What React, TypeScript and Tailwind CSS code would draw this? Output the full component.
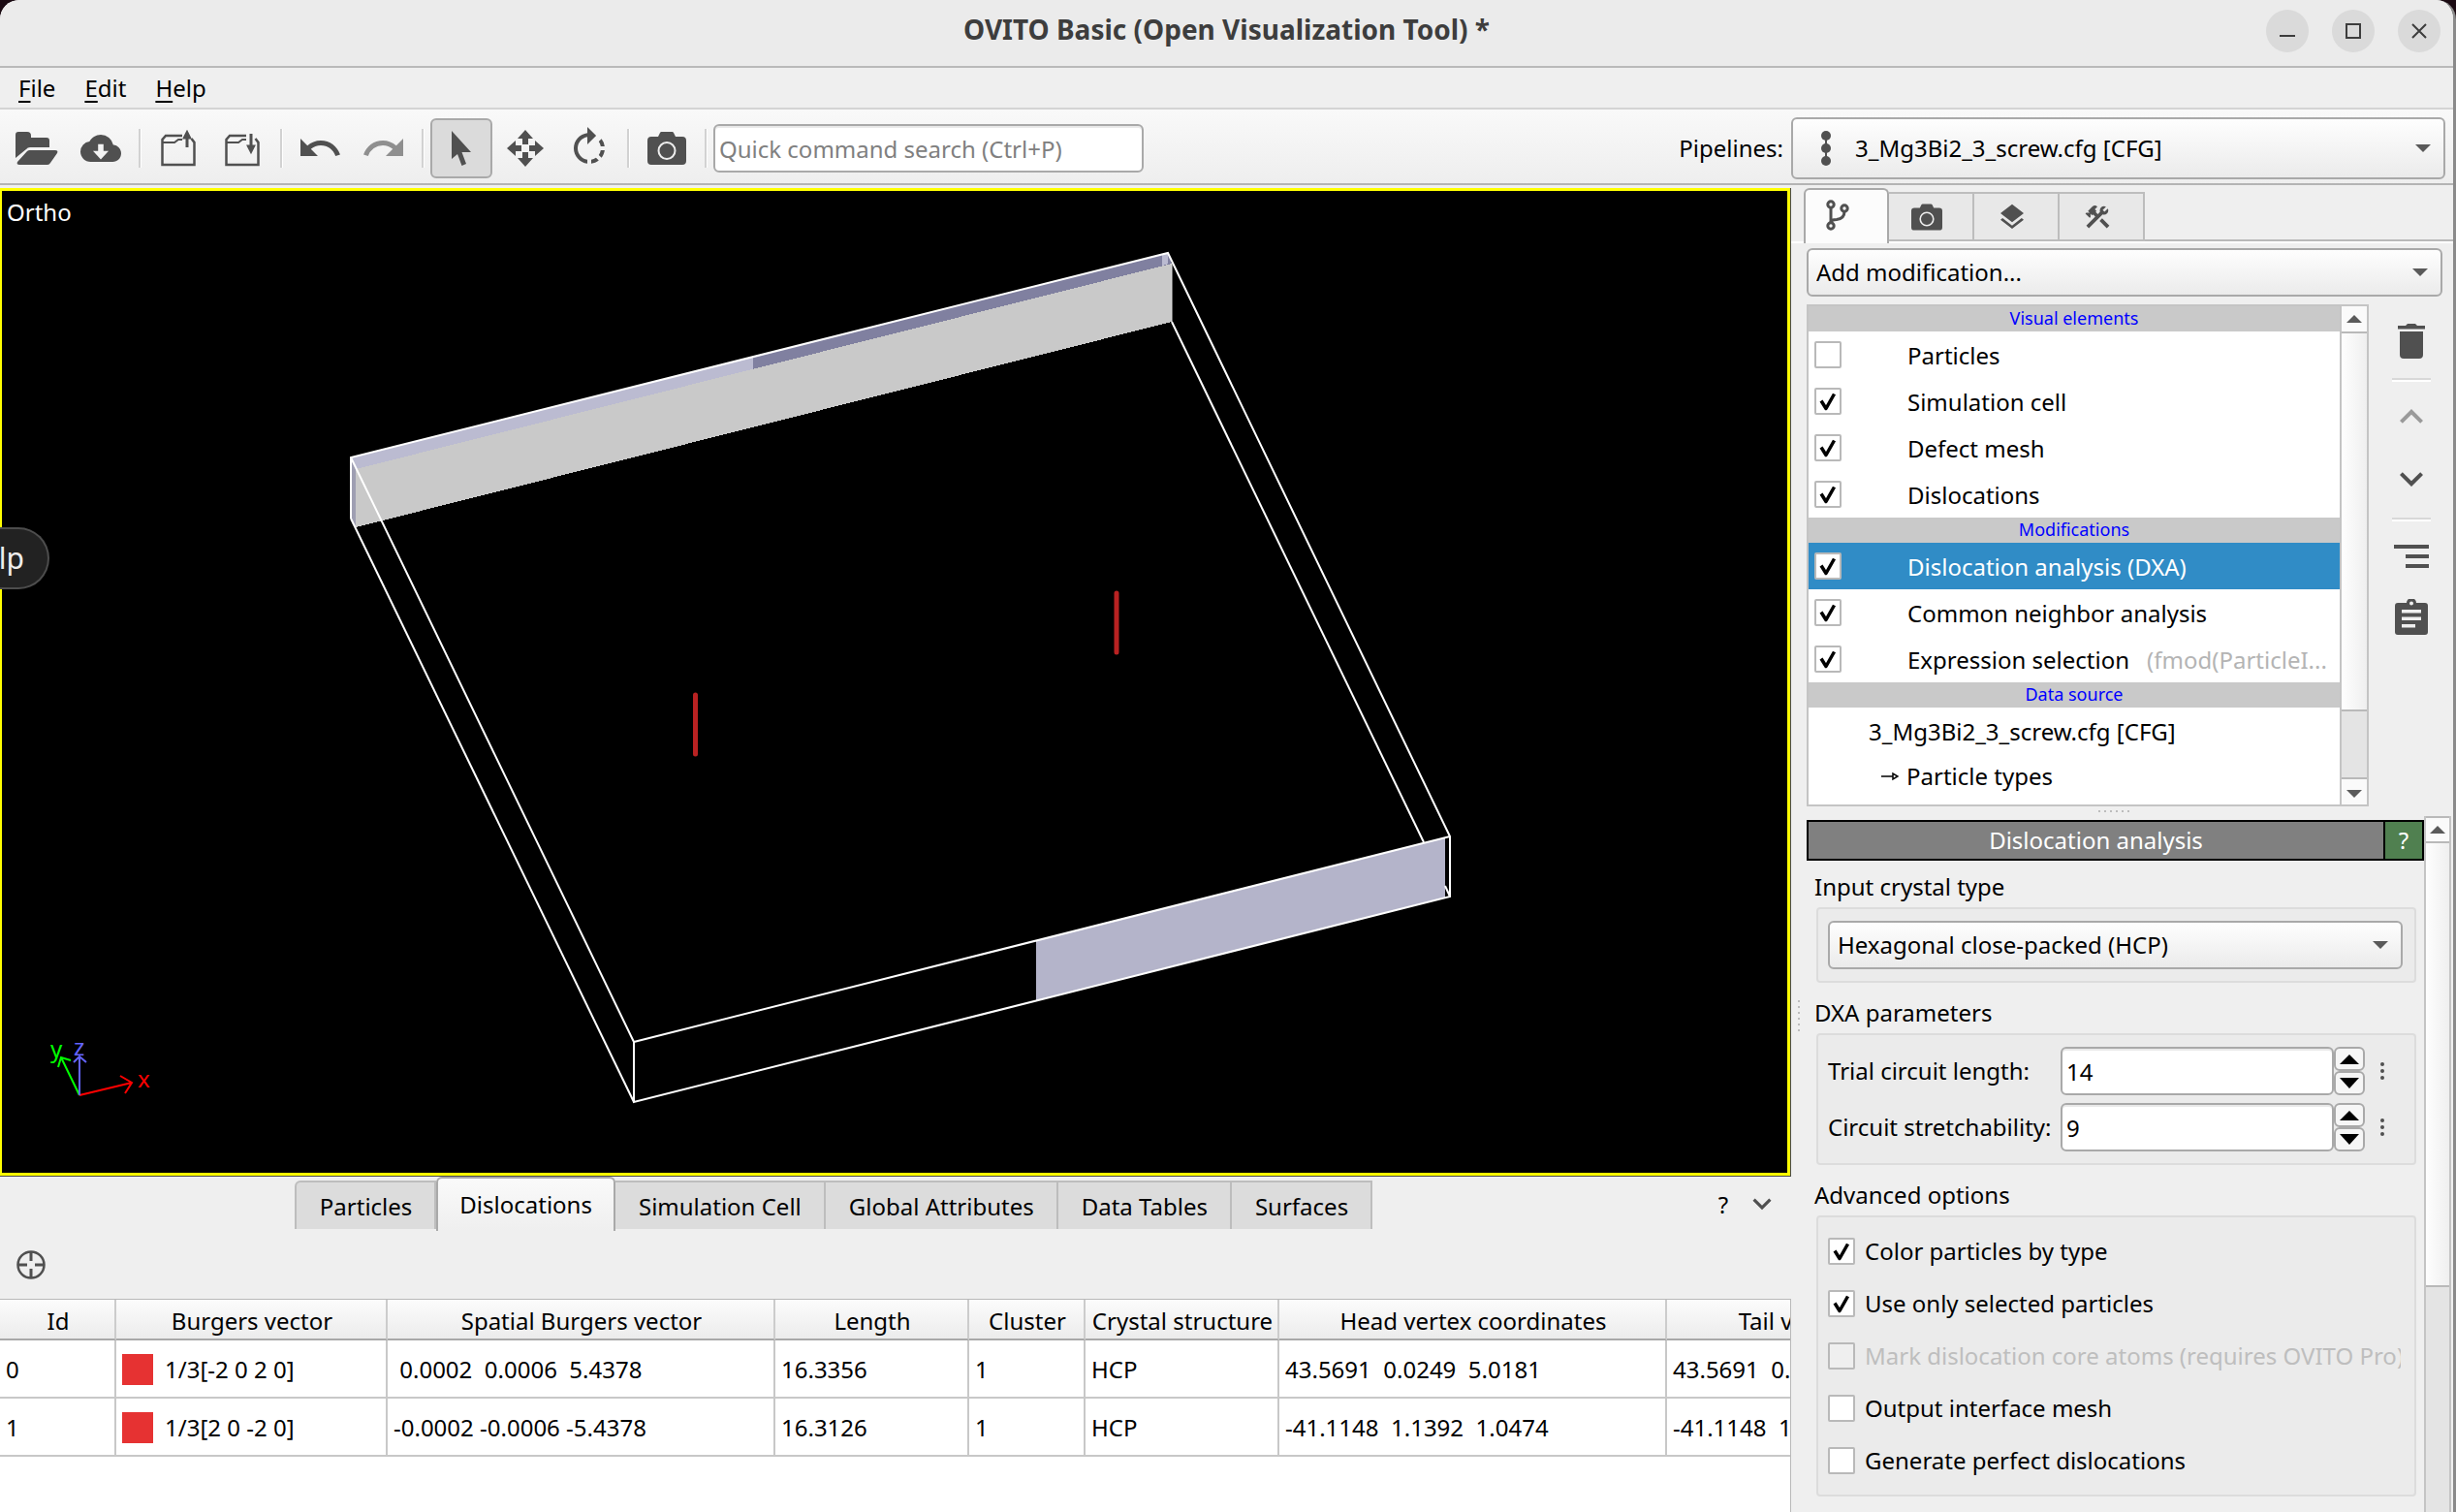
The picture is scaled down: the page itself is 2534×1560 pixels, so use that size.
import { useState } from 'react';
import type { ReactNode } from 'react';
import { MdConstruction, MdExpandLess, MdExpandMore, MdLayers, MdRedo, MdRotateRight, MdUndo } from 'react-icons/md';

interface PipelineItem {
    label: string;
    checked: boolean;
    hint?: string;
}

interface DislocationRow {
    id: number;
    burgers: string;
    spatial: string;
    length: string;
    cluster: number;
    structure: string;
    head: string;
    tail: string;
}

const VISUAL_ELEMENTS: PipelineItem[] = [
    { label: 'Particles', checked: false },
    { label: 'Simulation cell', checked: true },
    { label: 'Defect mesh', checked: true },
    { label: 'Dislocations', checked: true },
];

const MODIFICATIONS: PipelineItem[] = [
    { label: 'Dislocation analysis (DXA)', checked: true },
    { label: 'Common neighbor analysis', checked: true },
    { label: 'Expression selection', checked: true, hint: '(fmod(ParticleI...' },
];

const INSPECTOR_TABS = ['Particles', 'Dislocations', 'Simulation Cell', 'Global Attributes', 'Data Tables', 'Surfaces'];

const ROWS: DislocationRow[] = [
    {
        id: 0,
        burgers: '1/3[-2 0 2 0]',
        spatial: ' 0.0002  0.0006  5.4378',
        length: '16.3356',
        cluster: 1,
        structure: 'HCP',
        head: '43.5691  0.0249  5.0181',
        tail: '43.5691  0.0249  21.3537',
    },
    {
        id: 1,
        burgers: '1/3[2 0 -2 0]',
        spatial: '-0.0002 -0.0006 -5.4378',
        length: '16.3126',
        cluster: 1,
        structure: 'HCP',
        head: '-41.1148  1.1392  1.0474',
        tail: '-41.1148  1.1392  17.3600',
    },
];

const COLUMNS = [
    { title: 'Id', width: 'w-[120px]' },
    { title: 'Burgers vector', width: 'w-[280px]' },
    { title: 'Spatial Burgers vector', width: 'w-[400px]' },
    { title: 'Length', width: 'w-[200px]' },
    { title: 'Cluster', width: 'w-[120px]' },
    { title: 'Crystal structure', width: 'w-[200px]' },
    { title: 'Head vertex coordinates', width: 'w-[400px]' },
    { title: 'Tail vertex coordinates', width: 'w-[400px]' },
];

const OPTIONS = [
    { label: 'Color particles by type', checked: true },
    { label: 'Use only selected particles', checked: true },
    { label: 'Mark dislocation core atoms (requires OVITO Pro)', checked: false, disabled: true },
    { label: 'Output interface mesh', checked: false },
    { label: 'Generate perfect dislocations', checked: false },
];

/* ---------- icons ---------- */

function FolderOpenIcon() {
    return (
        <svg viewBox="0 0 44 34" className="w-11 h-[34px] fill-current">
            <path d="M0 27V3a3 3 0 0 1 3-3h9a4 4 0 0 1 4 4v2h16a3 3 0 0 1 3 3v7H15a5 5 0 0 0-4 2z" />
            <path d="M2 31 12 20a4 4 0 0 1 3-1h26c2 0 3 1 2 3l-7 10a4 4 0 0 1-3 2H4c-2 0-3-1-2-3z" />
        </svg>
    );
}

function CloudDownloadIcon() {
    return (
        <svg viewBox="0 0 24 24" className="size-[42px] fill-current">
            <path
                fillRule="evenodd"
                d="M19.35 10.04A7.49 7.49 0 0 0 12 4C9.11 4 6.6 5.64 5.35 8.04A5.994 5.994 0 0 0 0 14c0 3.31 2.69 6 6 6h13c2.76 0 5-2.24 5-5 0-2.64-2.05-4.78-4.65-4.96zM10.400 9.500h3.200v4h3l-4.600 5-4.600-5h3z"
            />
        </svg>
    );
}

function FolderArrowIcon({ down }: { down?: boolean }) {
    return (
        <svg viewBox="0 0 36 38" className="w-9 h-[38px] fill-none stroke-current" strokeWidth="2.500">
            <path d="M22 6H17H5L1.500 10V36h33V13l-3-4" />
            <path d="M1 13h13l4-3h4" strokeWidth="2" />
            {down ? (
                <path d="M27 4v13M24.500 17l2.500 5 2.500-5z" strokeWidth="3" />
            ) : (
                <path d="M27 18V7M24.500 8l2.500-5 2.500 5z" strokeWidth="3" />
            )}
        </svg>
    );
}

function CursorIcon() {
    return (
        <svg viewBox="0 0 22 36" className="w-[22px] h-9 fill-current">
            <path d="M1 0v29l6-5 4.500 12 4.500-2-4.500-12H21z" />
        </svg>
    );
}

function MoveIcon() {
    return (
        <svg viewBox="0 0 38 38" className="size-[38px] fill-current">
            <path d="M19 0l8 9h-5v6h-6V9h-5zM19 38l8-9h-5v-6h-6v6h-5zM0 19l9-8v5h6v6H9v5zM38 19l-9-8v5h-6v6h6v5z" />
        </svg>
    );
}

function CameraIcon({ className }: { className: string }) {
    return (
        <svg viewBox="0 0 40 34" className={className}>
            <path
                className="fill-current"
                d="M4 5h7l2-4a2 2 0 0 1 2-1h10a2 2 0 0 1 2 1l2 4h7a4 4 0 0 1 4 4v21a4 4 0 0 1-4 4H4a4 4 0 0 1-4-4V9a4 4 0 0 1 4-4z"
            />
            <circle cx="20" cy="19.500" r="8.500" className="fill-none stroke-[#eeeeee] stroke-2" />
        </svg>
    );
}

function PipelineIcon() {
    return (
        <svg viewBox="0 0 12 36" className="w-3 h-9 fill-current">
            <path d="M5 4h2v28H5z" />
            <circle cx="6" cy="5" r="5" />
            <circle cx="6" cy="18" r="5" />
            <circle cx="6" cy="31" r="5" />
        </svg>
    );
}

function BranchIcon() {
    return (
        <svg viewBox="0 0 24 32" className="w-6 h-8 fill-none stroke-current stroke-3">
            <circle cx="5" cy="5" r="3.200" />
            <circle cx="5" cy="27" r="3.200" />
            <circle cx="19" cy="9" r="3.200" />
            <path d="M5 8v16M19 12c0 6-3 8-8 8.500-3 0-6 .5-6 3.500" />
        </svg>
    );
}

function TrashIcon() {
    return (
        <svg viewBox="0 0 28 36" className="w-7 h-9 fill-current">
            <path d="M0 2h8l2-2h8l2 2h8v3.500H0zM2 8h24v24a4 4 0 0 1-4 4H6a4 4 0 0 1-4-4z" />
        </svg>
    );
}

function ClipboardIcon() {
    return (
        <svg viewBox="0 0 34 37" className="w-[34px] h-[37px] fill-current">
            <path
                fillRule="evenodd"
                d="M3 4h9a5 5 0 0 1 10 0h9a3 3 0 0 1 3 3v27a3 3 0 0 1-3 3H3a3 3 0 0 1-3-3V7a3 3 0 0 1 3-3zm14-1.500a2 2 0 1 0 0 4 2 2 0 0 0 0-4zM7 11v3.500h20V11zm0 7.500V22h20v-3.500zM7 26v3.500h14V26z"
            />
        </svg>
    );
}

function AlignRightIcon() {
    return (
        <svg viewBox="0 0 36 24" className="w-9 h-6 fill-current">
            <path d="M0 0h36v4H0zM12 10h24v4H12zM12 20h24v4H12z" />
        </svg>
    );
}

function TargetIcon() {
    return (
        <svg viewBox="0 0 30 30" className="size-[30px] fill-none stroke-current">
            <circle cx="15" cy="15" r="13.500" strokeWidth="2.500" />
            <path d="M15 1v10M15 19v10M1 15h10M19 15h10" strokeWidth="3" />
        </svg>
    );
}

function Triangle({ up, className }: { up?: boolean; className: string }) {
    return (
        <svg viewBox="0 0 16 8" className={className} preserveAspectRatio="none">
            <path d={up ? 'M0 8 8 0l8 8z' : 'M0 0h16L8 8z'} />
        </svg>
    );
}

/* ---------- controls ---------- */

function ToolButton({ label, active, muted, children }: { label: string; active?: boolean; muted?: boolean; children: ReactNode }) {
    const look = active ? 'border-2 border-[#a9a9a9] bg-[#dbdbdb]' : '';
    return (
        <button
            type="button"
            aria-label={label}
            className={`flex h-[62px] w-16 shrink-0 items-center justify-center rounded-md ${muted ? 'text-[#8f8f8f]' : 'text-[#505050]'} ${look}`}
        >
            {children}
        </button>
    );
}

function ToolSeparator() {
    return (
        <div className="flex w-3 justify-center">
            <div className="h-10 w-[3px] border-r border-l-2 border-l-[#d2d2d2] border-r-white" />
        </div>
    );
}

function Combo({ label, value, size, icon }: { label: string; value: string; size: string; icon?: ReactNode }) {
    return (
        <div className="relative min-w-0 flex-1">
            <select
                aria-label={label}
                className={`block w-full appearance-none rounded-md border-2 border-[#a9a9a9] bg-linear-to-b from-[#fefefe] to-[#ebebeb] outline-none ${size}`}
            >
                <option>{value}</option>
            </select>
            {icon && <div className="pointer-events-none absolute inset-y-0 left-[30px] flex items-center text-[#505050]">{icon}</div>}
            <div className="pointer-events-none absolute inset-y-0 right-[15px] flex items-center">
                <Triangle className="h-2 w-4 fill-[#5a5a5a]" />
            </div>
        </div>
    );
}

function CheckBox({ id, checked, disabled }: { id: string; checked: boolean; disabled?: boolean }) {
    return (
        <span className="relative size-7 shrink-0">
            <input
                id={id}
                type="checkbox"
                defaultChecked={checked}
                disabled={disabled}
                className="peer block size-full appearance-none rounded-xs border-2 border-[#b9b9b9] bg-white disabled:bg-[#efefef]"
            />
            <svg viewBox="0 0 28 28" className="pointer-events-none absolute inset-0 hidden size-full fill-none stroke-black peer-checked:block">
                <path d="M7 13.500 12 21.500 20.500 6.500" strokeWidth="3.500" strokeLinejoin="round" />
            </svg>
        </span>
    );
}

function SpinnerField({ id, label, value }: { id: string; label: string; value: string }) {
    return (
        <div className="flex h-[50px] items-center">
            <label htmlFor={id} className="w-[240px] shrink-0 whitespace-nowrap">
                {label}
            </label>
            <input
                id={id}
                defaultValue={value}
                className="h-full min-w-0 flex-1 rounded-md border-2 border-[#a9a9a9] bg-white px-1 inset-shadow-[0_2px_0_#e9e9e9] outline-none"
            />
            <div className="flex h-full w-8 shrink-0 flex-col">
                <button type="button" aria-label={`Increase ${label}`} className="flex flex-1 items-center justify-center rounded-md border-2 border-[#a9a9a9] bg-[#f6f6f6]">
                    <Triangle up className="h-[10px] w-5 fill-black" />
                </button>
                <button type="button" aria-label={`Decrease ${label}`} className="flex flex-1 items-center justify-center rounded-md border-2 border-[#a9a9a9] bg-[#f6f6f6]">
                    <Triangle className="h-[11px] w-5 fill-black" />
                </button>
            </div>
            <button type="button" aria-label={`${label} options`} className="flex h-full w-9 shrink-0 flex-col items-center justify-center gap-[3px]">
                <span className="size-1 rounded-full bg-[#505050]" />
                <span className="size-1 rounded-full bg-[#505050]" />
                <span className="size-1 rounded-full bg-[#505050]" />
            </button>
        </div>
    );
}

function GroupBox({ title, children, className }: { title: string; children: ReactNode; className: string }) {
    return (
        <section>
            <h3 className="mb-[5px] pt-px pl-2">{title}</h3>
            <div className={`mr-2 ml-[10px] rounded-sm border-2 border-[#dcdcdc] bg-[#ebebeb] ${className}`}>{children}</div>
        </section>
    );
}

/* ---------- window parts ---------- */

function TitleBar() {
    return (
        <header className="relative flex h-[70px] items-start justify-end gap-6 border-b-2 border-[#b9b9b9] bg-[#ebebeb] pt-[10px] pr-[13px] text-[#3d3d3d]">
            <h1 className="absolute inset-x-0 top-[14px] text-center text-[28px] font-bold">OVITO Basic (Open Visualization Tool) *</h1>
            {['M0 13h16', 'M1 1h14v14H1z', 'M1 1l14 14M15 1 1 15'].map((d, i) => (
                <button
                    key={d}
                    type="button"
                    aria-label={['Minimize', 'Maximize', 'Close'][i]}
                    className="relative flex size-11 items-center justify-center rounded-full bg-[#dadada]"
                >
                    <svg viewBox="0 0 16 16" className="size-4 fill-none stroke-current stroke-2">
                        <path d={d} />
                    </svg>
                </button>
            ))}
        </header>
    );
}

function MenuBar() {
    return (
        <nav className="flex h-[43px] items-center border-b-2 border-[#d4d4d4] pl-1">
            {['File', 'Edit', 'Help'].map((item) => (
                <button key={item} type="button" className="px-[15px]">
                    <span className="underline decoration-2 underline-offset-4">{item[0]}</span>
                    {item.slice(1)}
                </button>
            ))}
        </nav>
    );
}

function Toolbar() {
    return (
        <div className="flex h-[78px] items-center gap-[2px] border-b-2 border-[#b4b4b4] bg-linear-to-b from-[#f9f9f9] to-[#eeeeee] pt-1 pr-2 pl-[6px]">
            <ToolButton label="Load file"><FolderOpenIcon /></ToolButton>
            <ToolButton label="Load remote file"><CloudDownloadIcon /></ToolButton>
            <ToolSeparator />
            <ToolButton label="Load session"><FolderArrowIcon /></ToolButton>
            <ToolButton label="Save session"><FolderArrowIcon down /></ToolButton>
            <ToolSeparator />
            <ToolButton label="Undo"><MdUndo size={48} /></ToolButton>
            <ToolButton label="Redo" muted><MdRedo size={48} /></ToolButton>
            <ToolSeparator />
            <ToolButton label="Select" active><CursorIcon /></ToolButton>
            <ToolButton label="Move"><MoveIcon /></ToolButton>
            <ToolButton label="Rotate"><MdRotateRight size={48} /></ToolButton>
            <ToolSeparator />
            <ToolButton label="Render"><CameraIcon className="h-[34px] w-10" /></ToolButton>
            <ToolSeparator />
            <input
                aria-label="Quick command search"
                placeholder="Quick command search (Ctrl+P)"
                className="h-[50px] w-[444px] rounded-md border-2 border-[#a9a9a9] bg-white px-1 inset-shadow-[0_2px_0_#e9e9e9] outline-none placeholder:text-[#808080]"
            />
            <span className="ml-auto pr-[6px]">Pipelines:</span>
            <div className="flex w-[675px]">
                <Combo label="Pipelines" value="3_Mg3Bi2_3_screw.cfg [CFG]" size="h-16 pl-16" icon={<PipelineIcon />} />
            </div>
        </div>
    );
}

function Viewport() {
    return (
        <div className="relative mt-[3px] flex-1 border-r border-b border-[#4a4a4a]">
            <div className="absolute inset-0 overflow-hidden border-[3px] border-l-2 border-[#ffff00] bg-black">
                <svg viewBox="2 197 1842 1013" className="absolute inset-0 size-full">
                    {/* defect mesh, back side */}
                    <g shapeRendering="crispEdges">
                        <path d="M362 473 367 483V544L362 535z" fill="#9e9eb2" />
                        <path d="M362 472 777 368V381L367 484z" fill="#bbbbd1" />
                        <path d="M777 368 1205 261 1209 272 777 381z" fill="#8080a0" />
                        <path d="M1199 263 1205 261V272L1199 274z" fill="#bbbbd1" />
                        <path d="M367 484 1209 272V332L367 544z" fill="#c9c9c9" />
                        <path d="M1069 970 1491 864V926L1069 1032z" fill="#b4b4ca" />
                    </g>
                    {/* simulation cell */}
                    <g className="fill-none stroke-white stroke-2">
                        <path d="M362 535V472L1205 261 1496 863V925L654 1137V1075L362 472" />
                        <path d="M654 1075 1496 863" />
                        <path d="M362 535 654 1137" />
                        <path d="M1209 332 1469 869" />
                        <path d="M1491 914 1496 925" />
                        <path d="M1209 272V332" stroke="#e0e0e0" strokeWidth="1" />
                    </g>
                    {/* dislocation lines */}
                    <path d="M1152 612V673M717.500 717V778" stroke="#b92222" strokeWidth="5" strokeLinecap="round" />
                    {/* axis tripod */}
                    <g className="fill-none stroke-2">
                        <path d="M82 1130 136 1117M124 1110 136 1117 129 1128" stroke="#ff0000" />
                        <path d="M82 1130 63 1091M60 1101 63 1091 73 1094" stroke="#00ff00" />
                        <path d="M82 1130V1090M76 1096 82 1090 89 1096" stroke="#6464ff" />
                    </g>
                    <g className="text-[24px]">
                        <text x="142" y="1122" fill="#ff0000">x</text>
                        <text x="52" y="1091" fill="#00ff00">y</text>
                        <text x="76" y="1089" fill="#6464ff">z</text>
                    </g>
                </svg>
                <span className="absolute top-[6px] left-[5px] text-white">Ortho</span>
            </div>
            <div className="absolute top-[350px] left-0 flex h-16 w-[51px] items-center justify-end rounded-r-full border-2 border-l-0 border-[#4d4d4d] bg-[#222222] pr-6 text-[30px] text-[#eeeeee]">
                lp
            </div>
        </div>
    );
}

function DataInspector() {
    const [tab, setTab] = useState('Dislocations');

    return (
        <div className="flex shrink-0 flex-col">
            <div className="flex h-14">
                <div className="flex flex-1 items-start justify-center">
                    {INSPECTOR_TABS.map((name) => (
                        <button
                            key={name}
                            type="button"
                            onClick={() => setTab(name)}
                            className={
                                name === tab
                                    ? 'h-14 rounded-t-md border-2 border-b-0 border-[#a9a9a9] bg-linear-to-b from-[#fafafa] to-[#efefef] px-[22px]'
                                    : 'mt-1 h-[50px] border-t-2 border-r-2 border-[#bdbdbd] bg-[#dcdcdc] pt-[2px] pr-[23px] pl-6 first:rounded-tl-md first:border-l-2'
                            }
                        >
                            {name}
                        </button>
                    ))}
                </div>
                <div className="flex w-32 items-center justify-end pr-[10px]">
                    <button type="button" className="w-10 pt-[2px]">?</button>
                    <button type="button" aria-label="Collapse" className="flex w-10 justify-center text-[#505050]">
                        <MdExpandMore size={38} />
                    </button>
                </div>
            </div>
            <div className="flex h-[70px] items-center px-[17px] text-[#505050]">
                <button type="button" aria-label="Pick dislocation">
                    <TargetIcon />
                </button>
            </div>
            <div className="h-[220px] overflow-hidden border-t border-r border-[#b9b9b9] bg-white">
                <table className="w-[2120px] table-fixed border-separate border-spacing-0 whitespace-pre">
                    <thead>
                        <tr className="h-[42px] bg-linear-to-b from-[#fcfcfc] to-[#ebebeb]">
                            {COLUMNS.map((col) => (
                                <th key={col.title} className={`border-r-2 border-b-2 border-r-[#cccccc] border-b-[#a9a9a9] pt-[3px] pl-[2px] font-normal ${col.width}`}>
                                    {col.title}
                                </th>
                            ))}
                        </tr>
                    </thead>
                    <tbody>
                        {ROWS.map((row) => (
                            <tr key={row.id} className="h-[60px] *:border-r-2 *:border-b-2 *:border-[#c8c8c8] *:px-[6px] *:pt-[2px] *:pb-0">
                                <td>{row.id}</td>
                                <td>
                                    <span className="flex items-center gap-3">
                                        <span className="size-8 bg-[#e63232]" />
                                        {row.burgers}
                                    </span>
                                </td>
                                <td>{row.spatial}</td>
                                <td>{row.length}</td>
                                <td>{row.cluster}</td>
                                <td>{row.structure}</td>
                                <td>{row.head}</td>
                                <td>{row.tail}</td>
                            </tr>
                        ))}
                    </tbody>
                </table>
            </div>
        </div>
    );
}

function ListHeading({ children }: { children: ReactNode }) {
    return <div className="h-[26px] bg-[#c9c9c9] text-center text-[18px] leading-6 text-[#0000ff]">{children}</div>;
}

function ListRow({ item, selected }: { item: PipelineItem; selected?: boolean }) {
    const id = item.label.replace(/\W+/g, '-').toLowerCase();
    return (
        <div className={`flex h-12 items-center px-[6px] ${selected ? 'bg-[#308cc6] text-white' : ''}`}>
            <CheckBox id={id} checked={item.checked} />
            <label htmlFor={id} className="ml-[68px] pt-[2px] whitespace-nowrap">{item.label}</label>
            {item.hint && <span className="pt-[2px] pl-[18px] whitespace-nowrap text-[#b4b4b4]">{item.hint}</span>}
        </div>
    );
}

function PipelineEditor() {
    return (
        <div className="flex gap-[7px] pr-[6px] pl-4">
            <div className="flex h-[518px] w-[580px] shrink-0 border-2 border-[#c4c4c4] bg-white">
                <div className="min-w-0 flex-1 overflow-hidden">
                    <ListHeading>Visual elements</ListHeading>
                    {VISUAL_ELEMENTS.map((item) => <ListRow key={item.label} item={item} />)}
                    <ListHeading>Modifications</ListHeading>
                    {MODIFICATIONS.map((item, i) => <ListRow key={item.label} item={item} selected={i === 0} />)}
                    <ListHeading>Data source</ListHeading>
                    <div className="flex h-12 items-center pt-[2px] pl-[62px]">3_Mg3Bi2_3_screw.cfg [CFG]</div>
                    <div className="flex h-11 items-center gap-2 pt-[2px] pl-[75px]">
                        <svg viewBox="0 0 18 10" className="h-[10px] w-[18px] fill-none stroke-black" strokeWidth="1.500">
                            <path d="M0 5h12M12 2v6l5-3z" />
                        </svg>
                        Particle types
                    </div>
                </div>
                <div className="flex w-7 shrink-0 flex-col border-l-2 border-[#c4c4c4] bg-[#e4e4e4]">
                    <div className="flex h-7 items-center justify-center border-b-2 border-[#b9b9b9] bg-[#fafafa]">
                        <Triangle up className="h-2 w-4 fill-[#5a5a5a]" />
                    </div>
                    <div className="h-[390px] border-b-2 border-[#b9b9b9] bg-linear-to-r from-[#fefefe] to-[#efefef]" />
                    <div className="mt-auto flex h-7 items-center justify-center border-t-2 border-[#b9b9b9] bg-[#fafafa] pt-1">
                        <Triangle className="h-2 w-4 fill-[#5a5a5a]" />
                    </div>
                </div>
            </div>
            <div className="flex flex-1 flex-col items-center pt-5 text-[#505050]">
                <button type="button" aria-label="Delete modifier"><TrashIcon /></button>
                <div className="mt-5 h-1 w-10 border-t-2 border-b-2 border-t-[#d8d8d8] border-b-white" />
                <button type="button" aria-label="Move up" className="mt-3"><MdExpandLess size={48} className="text-[#9a9a9a]" /></button>
                <button type="button" aria-label="Move down" className="mt-4"><MdExpandMore size={48} /></button>
                <div className="mt-4 h-1 w-10 border-t-2 border-b-2 border-t-[#d8d8d8] border-b-white" />
                <button type="button" aria-label="Toggle group" className="mt-6"><AlignRightIcon /></button>
                <button type="button" aria-label="Manage templates" className="mt-8"><ClipboardIcon /></button>
            </div>
        </div>
    );
}

function CommandPanel() {
    const icons = [
        <BranchIcon key="pipeline" />,
        <CameraIcon key="render" className="h-7 w-8" />,
        <MdLayers key="layers" size={32} />,
        <MdConstruction key="tools" size={30} />,
    ];

    return (
        <aside className="flex w-[683px] shrink-0 flex-col">
            <div className="mt-[3px] flex h-[57px] items-start border-b-2 border-white pl-[13px]">
                {icons.map((icon, i) => (
                    <button
                        key={i}
                        type="button"
                        aria-label={['Pipeline', 'Render', 'Overlays', 'Utilities'][i]}
                        className={`flex w-[88px] items-center justify-center text-[#505050] ${
                            i === 0
                                ? 'h-[57px] rounded-t-md border-2 border-b-0 border-[#a9a9a9] bg-[#fcfcfc] pr-[18px] pb-1'
                                : 'mt-1 h-[51px] border-t-2 border-r-2 border-b-2 border-[#bdbdbd] bg-[#e8e8e8] pr-2'
                        }`}
                    >
                        {icon}
                    </button>
                ))}
                <div className="h-[55px] flex-1 border-b-2 border-[#b9b9b9]" />
            </div>
            <div className="mt-[5px] mb-2 flex pr-[11px] pl-4">
                <Combo label="Add modification" value="Add modification..." size="h-[50px] pl-2" />
            </div>
            <PipelineEditor />
            <div className="flex h-[10px] justify-center gap-1 pt-1 pr-[17px]">
                {[0, 1, 2, 3, 4, 5].map((n) => <span key={n} className="size-[2px] bg-[#bdbdbd]" />)}
            </div>
            <div className="flex flex-1 pr-[2px]">
                <div className="flex w-4 shrink-0 flex-col items-center gap-1 pt-[190px]">
                    {[0, 1, 2, 3, 4, 5].map((n) => <span key={n} className="size-[2px] bg-[#bdbdbd]" />)}
                </div>
                <div className="flex min-w-0 flex-1 flex-col gap-[14px] pt-1">
                    <div className="-mb-1 flex h-[42px] border-2 border-black bg-[#808080] text-white">
                        <h2 className="flex flex-1 items-center justify-center">Dislocation analysis</h2>
                        <button type="button" className="w-10 border-l-2 border-black bg-[#508050]">?</button>
                    </div>
                    <GroupBox title="Input crystal type" className="flex py-3 pr-3 pl-[10px]">
                        <Combo label="Input crystal type" value="Hexagonal close-packed (HCP)" size="h-[50px] pl-2" />
                    </GroupBox>
                    <GroupBox title="DXA parameters" className="flex flex-col gap-2 py-3 pr-[15px] pl-[10px]">
                        <SpinnerField id="circuit-length" label="Trial circuit length:" value="14" />
                        <SpinnerField id="stretchability" label="Circuit stretchability:" value="9" />
                    </GroupBox>
                    <GroupBox title="Advanced options" className="py-2 pr-[14px] pl-[10px]">
                        {OPTIONS.map((opt, i) => (
                            <div key={opt.label} className="flex h-[54px] items-center gap-[10px] overflow-hidden">
                                <CheckBox id={`option-${i}`} checked={opt.checked} disabled={opt.disabled} />
                                <label htmlFor={`option-${i}`} className={`whitespace-nowrap ${opt.disabled ? 'text-[#bebebe]' : ''}`}>
                                    {opt.label}
                                </label>
                            </div>
                        ))}
                    </GroupBox>
                </div>
                <div className="flex w-7 shrink-0 flex-col border-x-2 border-[#c4c4c4] bg-[#e4e4e4]">
                    <div className="flex h-7 items-center justify-center border-y-2 border-[#b9b9b9] bg-[#fafafa]">
                        <Triangle up className="h-2 w-4 fill-[#5a5a5a]" />
                    </div>
                    <div className="h-[458px] border-b-2 border-[#b9b9b9] bg-linear-to-r from-[#fefefe] to-[#efefef]" />
                </div>
            </div>
        </aside>
    );
}

export default function App() {
    return (
        <div className="min-h-screen bg-[#1a0a12] font-['Noto_Sans',sans-serif] text-[24px] leading-8 text-black">
            <div className="flex min-h-screen flex-col overflow-hidden rounded-t-[20px] border-r-[3px] border-[#8a8a8a] bg-[#efefef]">
                <TitleBar />
                <MenuBar />
                <Toolbar />
                <div className="flex flex-1">
                    <main className="flex min-w-0 flex-1 flex-col">
                        <Viewport />
                        <DataInspector />
                    </main>
                    <CommandPanel />
                </div>
            </div>
        </div>
    );
}
